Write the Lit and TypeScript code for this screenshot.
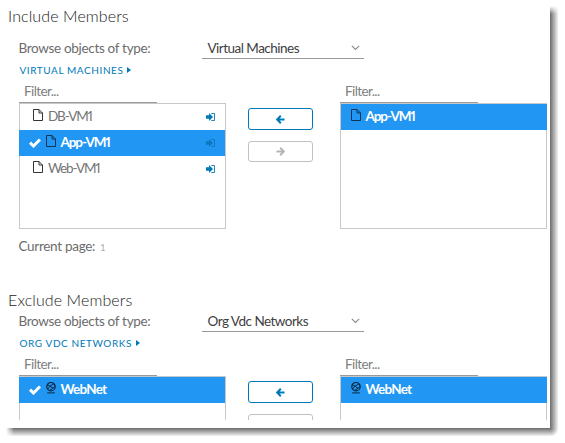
import { LitElement, html, css, svg, nothing } from "lit";
import { customElement, property } from "lit/decorators.js";

interface Item {
  name: string;
  icon: "file" | "network";
  selected?: boolean;
  checked?: boolean;
  movable?: boolean;
}

const fileIcon = html`<svg class="file" width="10" height="12" viewBox="0 0 10 12">
  <path d="M.5 .5H6L9.5 4V11.5H.5Z M6 .5V4H9.5" fill="none" stroke="currentColor" />
</svg>`;

const networkIcon = html`<svg class="net" width="10" height="12" viewBox="0 0 10 12">
  <circle cx="5" cy="4.7" r="4.2" fill="none" stroke="currentColor" stroke-width="1.2" />
  <path d="M1.3 2.8L4 4.2L7.8 1.8M4 4.2L7 6.2L9 4.5M1.6 7L4 4.2M3.5 8.6L7 6.2M1.2 10.9H8.8" fill="none" stroke="currentColor" stroke-width="1" />
</svg>`;

const checkIcon = html`<svg class="check" width="12" height="10" viewBox="0 0 12 10">
  <path d="M1 4.7L4.5 8L11 1.5" fill="none" stroke="currentColor" stroke-width="3" />
</svg>`;

const moveIcon = html`<svg class="move" width="9" height="8" viewBox="0 0 9 8">
  <path d="M0 2.2H3V0L7 4L3 8V5.8H0Z" fill="currentColor" />
  <path d="M5.3 .5H8.5V7.5H5.3" fill="none" stroke="currentColor" stroke-width=".9" />
</svg>`;

const arrow = (dir: "left" | "right") => html`<svg width="9" height="9" viewBox="0 0 9 9">
  ${dir === "left"
    ? svg`<path d="M8.5 4.5H1.5M4.8 .8L1.2 4.5L4.8 8.2" fill="none" stroke="currentColor" stroke-width="2" />`
    : svg`<path d="M.5 4.5H7.5M4.2 .8L7.8 4.5L4.2 8.2" fill="none" stroke="currentColor" stroke-width="2" />`}
</svg>`;

@customElement("object-list")
export class ObjectList extends LitElement {
  @property({ attribute: false }) items: Item[] = [];
  @property({ type: Boolean, reflect: true }) target = false;

  static styles = css`
    :host { display: block; width: 207px; }
    .filter {
      box-sizing: border-box; width: 138px; height: 22px; padding-left: 5px;
      border-bottom: 1px solid #9a9a9a; color: #808080;
      font-size: 13.5px; line-height: 20px; letter-spacing: -0.6px;
    }
    .box {
      box-sizing: border-box; height: 126px; border: 1px solid #c8c8c8;
    }
    .row {
      box-sizing: border-box; display: flex; align-items: center; height: 26px;
      padding: 0 10px 0 13px; color: #757575; font-size: 13.5px;
    }
    .row.selected { background: #2196f3; color: #fff; font-weight: 700; }
    :host(:not([target])) .row.selected { margin-left: -1px; padding-left: 14px; }
    :host([target]) .row.selected { margin-right: -1px; padding-left: 10px; }
    .row.checked.selected { padding-left: 10px !important; }
    .check { margin-right: 5px; color: #fff; }
    .file, .net { margin: -4px 4px 0 0; color: #333; flex: none; }
    .selected .file { color: #0d3557; }
    .selected .net { color: #0b2740; }
    .name {
      flex: 1; line-height: 24px; margin-top: -2px; white-space: nowrap;
      letter-spacing: -1.15px; font-variant-numeric: proportional-nums;
      padding-left: 1px;
    }
    .selected .name { letter-spacing: -1.1px; padding-left: 0.5px; }
    .selected .net + .name { letter-spacing: -0.75px; }
    .move { color: #0079b8; }
    .selected .move { color: #0d77bd; }
  `;

  render() {
    return html`
      <div class="filter">Filter...</div>
      <div class="box">
        ${this.items.map(
          (i) => html`<div class="row ${i.selected ? "selected" : ""} ${i.checked ? "checked" : ""}">
            ${i.checked ? checkIcon : nothing}
            ${i.icon === "file" ? fileIcon : networkIcon}
            <span class="name">${i.name}</span>
            ${i.movable ? moveIcon : nothing}
          </div>`
        )}
      </div>
    `;
  }
}

@customElement("member-picker")
export class MemberPicker extends LitElement {
  @property() heading = "";
  @property() type = "";
  @property({ type: Number }) page = 0;
  @property({ attribute: false }) available: Item[] = [];
  @property({ attribute: false }) chosen: Item[] = [];

  static styles = css`
    :host { display: block; }
    h2 {
      margin: 0 0 0 8px; height: 20px; line-height: 20px; font-size: 16px;
      font-weight: 300; color: #222; letter-spacing: 0.1px; white-space: nowrap;
    }
    .body { margin: var(--gap, 0) 0 0 19px; }
    .browse { display: flex; height: 22px; font-size: 13.5px; line-height: 22px; color: #6c6c6c; }
    .label { width: 183px; white-space: nowrap; letter-spacing: -0.32px; margin-left: -0.5px; margin-right: 0.5px; }
    .select {
      box-sizing: border-box; width: 162px; display: flex; align-items: center;
      justify-content: space-between; padding: 0 4px 0 5.5px; color: #404040;
      border-bottom: 1px solid #999; letter-spacing: -0.52px;
    }
    .chev { color: #8a8a8a; }
    .crumb {
      display: flex; align-items: center; gap: 4px; height: 22px; padding-left: 0.5px;
      color: #0079b8; font-size: 10px; letter-spacing: 0.58px;
    }
    .crumb span { white-space: nowrap; }
    .lists { display: flex; }
    .moves { width: 65px; margin: 27px 27px 0 22px; display: flex; flex-direction: column; gap: 11px; }
    .btn {
      box-sizing: border-box; height: 22px; border: 1px solid #0079b8; border-radius: 3px;
      color: #0079b8; display: flex; align-items: center; justify-content: center;
    }
    .btn.off { height: 21px; border-color: #c1c1c1; color: #b5b5b5; }
    .page { height: 34px; line-height: 34px; font-size: 13.5px; color: #6c6c6c; letter-spacing: -0.3px; margin-left: -0.5px; }
    .num { font-size: 9px; color: #aaa; margin-left: 2px; }
  `;

  render() {
    return html`
      <h2>${this.heading}</h2>
      <div class="body">
        <div class="browse">
          <span class="label">Browse objects of type:</span>
          <div class="select">
            <span>${this.type}</span>
            <svg class="chev" width="9" height="6" viewBox="0 0 9 6">
              <path d="M.8 .8L4.5 4.5L8.2 .8" fill="none" stroke="currentColor" stroke-width="1.1" />
            </svg>
          </div>
        </div>
        <div class="crumb">
          <span>${this.type.toUpperCase()}</span>
          <svg width="4" height="6" viewBox="0 0 4 6"><path d="M0 0L4 3L0 6Z" fill="currentColor" /></svg>
        </div>
        <div class="lists">
          <object-list .items=${this.available}></object-list>
          <div class="moves">
            <div class="btn">${arrow("left")}</div>
            <div class="btn off">${arrow("right")}</div>
          </div>
          <object-list target .items=${this.chosen}></object-list>
        </div>
        ${this.page
          ? html`<div class="page">Current page: <span class="num">${this.page}</span></div>`
          : nothing}
      </div>
    `;
  }
}

@customElement("app-root")
export class AppRoot extends LitElement {
  static styles = css`
    :host {
      display: grid; grid-template: 428px 15px / 550px 15px; width: 565px; height: 443px;
      overflow: hidden; background: #fff; font-family: Lato, "Open Sans", sans-serif;
    }
    .panel { background: #fff; overflow: hidden; }
    .content { height: 420px; overflow: hidden; }
    .side {
      width: 8px; margin-top: 6px;
      background: linear-gradient(90deg, #6b6b6b, #a8a8a8 45%, #f2f2f2);
      mask-image: linear-gradient(transparent, #000 8px);
    }
    .under {
      height: 8px; margin-left: 6px;
      background: linear-gradient(#6b6b6b, #a8a8a8 45%, #f2f2f2);
      mask-image: linear-gradient(90deg, transparent, #000 8px);
    }
    .corner {
      width: 8px; height: 8px;
      background: radial-gradient(circle at 0 0, #6b6b6b, #a8a8a8 3.6px, #f2f2f2 8px, #fff 9px);
    }
    .include { --gap: 11px; padding-top: 6px; height: 284px; }
  `;

  render() {
    return html`
      <div class="panel">
        <div class="content">
          <member-picker
            class="include"
            heading="Include Members"
            type="Virtual Machines"
            page="1"
            .available=${[
              { name: "DB-VM1", icon: "file", movable: true },
              { name: "App-VM1", icon: "file", selected: true, checked: true, movable: true },
              { name: "Web-VM1", icon: "file", movable: true },
            ] as Item[]}
            .chosen=${[{ name: "App-VM1", icon: "file", selected: true }] as Item[]}
          ></member-picker>
          <member-picker
            heading="Exclude Members"
            type="Org Vdc Networks"
            .available=${[{ name: "WebNet", icon: "network", selected: true, checked: true }] as Item[]}
            .chosen=${[{ name: "WebNet", icon: "network", selected: true }] as Item[]}
          ></member-picker>
        </div>
      </div>
      <div class="side"></div>
      <div class="under"></div>
      <div class="corner"></div>
    `;
  }
}
